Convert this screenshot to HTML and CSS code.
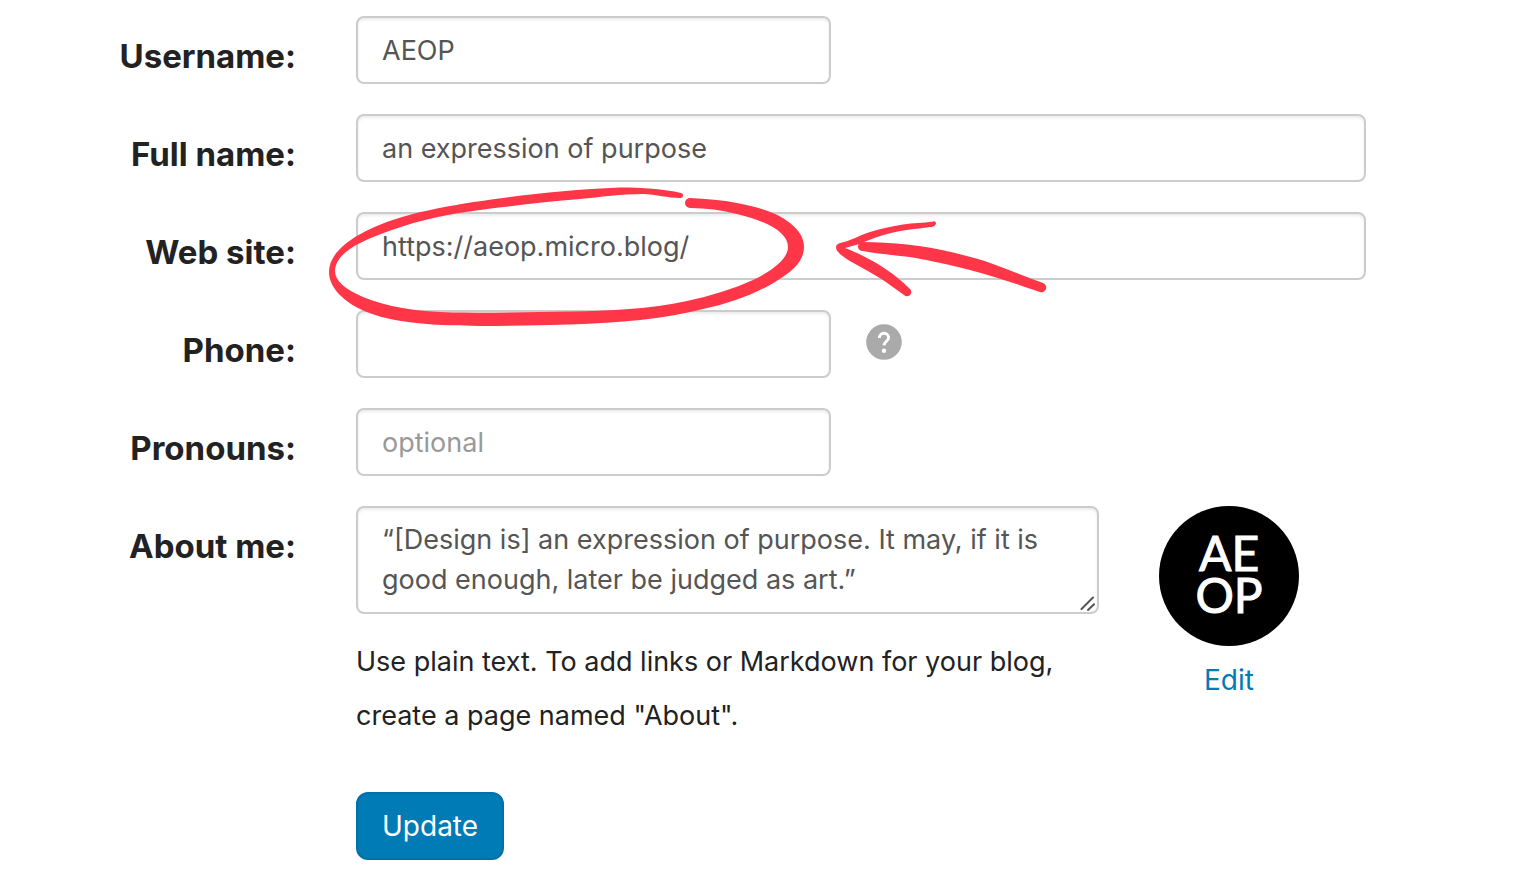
FILE: index.html
```html
<!DOCTYPE html>
<html lang="en">
<head>
<meta charset="utf-8">
<meta name="viewport" content="width=device-width, initial-scale=1">
<title>Account</title>
<link rel="stylesheet" href="styles.css">
</head>
<body>
<form class="profile">
  <label class="label" for="username">Username:</label>
  <div class="field"><input class="control short" id="username" type="text" value="AEOP"></div>

  <label class="label" for="fullname">Full name:</label>
  <div class="field"><input class="control" id="fullname" type="text" value="an expression of purpose"></div>

  <label class="label" for="website">Web site:</label>
  <div class="field">
    <input class="control" id="website" type="text" value="https://aeop.micro.blog/">
    <svg class="callout" viewBox="320 180 740 160" width="740" height="160" aria-hidden="true">
      <path d="M681 193C664 189 642 187.500 620 187.500C580 189 540 193 503 198C450 205 402 213 366 231C342 243 329 257 329 272C329 286 341 299 358 308C385 322 425 325.500 480 326C510 326 540 325.500 570 324.500C620 323 663 319 703 309C737 302 765 290 787 274C798 266 804 257 804 247C804 238 799 230 790 223C776 212 758 207 737 203C722 200 706 199 690 198A5 5 0 0 0 690 208C706 208 722 210 737 214C766 221 788 232 788 247C788 258 774 270 753 280C733 289 710 296 687 301C650 309 610 311 570 311.500C531 312 492 313 453 312.500C418 312 387 307 363 297C345 289 335 281 335 271C335 261 344 251 360 243C385 231 415 221 453 214C470 211 487 209 503 207C529 204 555 201 580 199C600 197 622 194 643 194C656 194.500 668 198 680 198A2.500 2.500 0 0 0 681 193Z"/>
      <path d="M862 242C877 242 892 243 907 244.500C923 246 938 249 953 252.500C967 256 980 259 993 264C1010 270 1026 277 1043 283A4.600 4.600 0 0 1 1040 292C1029 289 1018 284 1007 281C991 276 976 271 960 267.500C945 264 929 260 913 257.500C896 255 877 254 863 251A4.500 4.500 0 0 1 862 242Z"/>
      <path d="M933 221.500C923 223 913 223 903 224.500C892 226 880 229 870 232C858 236 850 241 842 242.500C838 243 836 245 836 247C836 250 837 251 840 254C845 258 851 262 857 265C866 270 875 275 883 280C890 285 897 290 904 295A4 4 0 0 0 910 289C903 282 896 276 887 270C880 265 873 261 867 258C860 254 852 251 845 248C851 246 857 245 863 242.500C871 239 879 236 887 234C901 230 916 229 930 227C934 227 936 225 936 223A2 2 0 0 0 933 221.500Z"/>
    </svg>
  </div>

  <label class="label" for="phone">Phone:</label>
  <div class="field">
    <input class="control short" id="phone" type="tel">
    <button class="help" type="button" aria-label="Help">
      <svg viewBox="0 0 36 36" width="36" height="36" aria-hidden="true">
        <circle class="help-disc" cx="18" cy="18" r="17.800"/>
        <path class="help-hook" d="M13.400 14C13.400 11 15.400 9.300 18 9.300C20.700 9.300 22.600 11.200 22.600 13.700C22.600 17 18.200 17.500 18 21.300"/>
        <circle class="help-dot" cx="18" cy="26.700" r="2.200"/>
      </svg>
    </button>
  </div>

  <label class="label" for="pronouns">Pronouns:</label>
  <div class="field"><input class="control short" id="pronouns" type="text" placeholder="optional"></div>

  <label class="label" for="about">About me:</label>
  <div class="field about">
    <div class="bio">
      <div class="bio-box">
        <textarea class="control bio-text" id="about" rows="2">“[Design is] an expression of purpose. It may, if it is good enough, later be judged as art.”</textarea>
        <svg class="grip" viewBox="0 0 16 16" width="16" height="16" aria-hidden="true">
          <path d="M1.500 13L13 1.500M8 14L14 8.300"/>
        </svg>
      </div>
      <p class="note">Use plain text. To add links or Markdown for your blog, create a page named "About".</p>
    </div>
    <div class="photo">
      <div class="avatar">AE OP</div>
      <a class="edit" href="#">Edit</a>
    </div>
  </div>

  <div class="actions"><button class="update" type="submit">Update</button></div>
</form>
</body>
</html>
```
FILE: styles.css
```css
* {
  box-sizing: border-box;
}

body {
  margin: 0;
  background: #fff;
  color: #222;
  font: 27px/40px Inter, "Liberation Sans", sans-serif;
}

.profile {
  display: grid;
  grid-template-columns: 296px minmax(0, 1fr);
  column-gap: 60px;
  row-gap: 30px;
  padding: 16px 152px 28px 0;
}

.label {
  padding-top: 20px;
  text-align: right;
  font-size: 33px;
  font-weight: 700;
}

.field {
  position: relative;
  display: flex;
  align-items: center;
}

.control {
  width: 100%;
  height: 68px;
  padding: 0 24px;
  border: 2px solid #ccc;
  border-radius: 8px;
  background: #fff;
  box-shadow: inset 0 2px 3px rgba(0, 0, 0, 0.08);
  color: #555;
  font: inherit;
}

.control::placeholder {
  color: #999;
  opacity: 1;
}

.short {
  width: 47%;
}

.callout {
  position: absolute;
  top: -32px;
  left: -36px;
  z-index: 1;
  fill: #ff3548;
  pointer-events: none;
}

.help {
  display: flex;
  margin: 0 0 4px 35px;
  padding: 0;
  border: 0;
  background: none;
}

.help-disc {
  fill: #aaa;
}

.help-hook {
  fill: none;
  stroke: #fff;
  stroke-width: 3;
}

.help-dot {
  fill: #fff;
}

.about {
  align-items: flex-start;
  gap: 60px;
  padding-right: 67px;
}

.bio {
  flex: 1;
  min-width: 0;
}

.bio-box {
  position: relative;
}

.bio-text {
  display: block;
  height: 108px;
  padding: 12px 24px;
  resize: none;
  overflow: hidden;
}

.grip {
  position: absolute;
  right: 3px;
  bottom: 2px;
  fill: none;
  stroke: #555;
  stroke-width: 2;
  stroke-linecap: round;
  pointer-events: none;
}

.note {
  margin: 21px 0 0;
  line-height: 54px;
}

.photo {
  display: flex;
  flex-direction: column;
  align-items: center;
  gap: 14px;
}

.avatar {
  width: 140px;
  height: 140px;
  padding: 26px 36px;
  border-radius: 50%;
  background: #000;
  color: #fff;
  font: 48px/42px Lato, sans-serif;
  text-align: center;
  -webkit-text-stroke: 1px #fff;
}

.edit {
  color: #007bb6;
  font-size: 28px;
  text-decoration: none;
}

.actions {
  grid-column: 2;
  padding-top: 19px;
}

.update {
  height: 68px;
  padding: 0 24px;
  border: 2px solid #0071a8;
  border-radius: 12px;
  background: #007bb6;
  color: #fff;
  font: inherit;
  font-size: 28px;
}
```
